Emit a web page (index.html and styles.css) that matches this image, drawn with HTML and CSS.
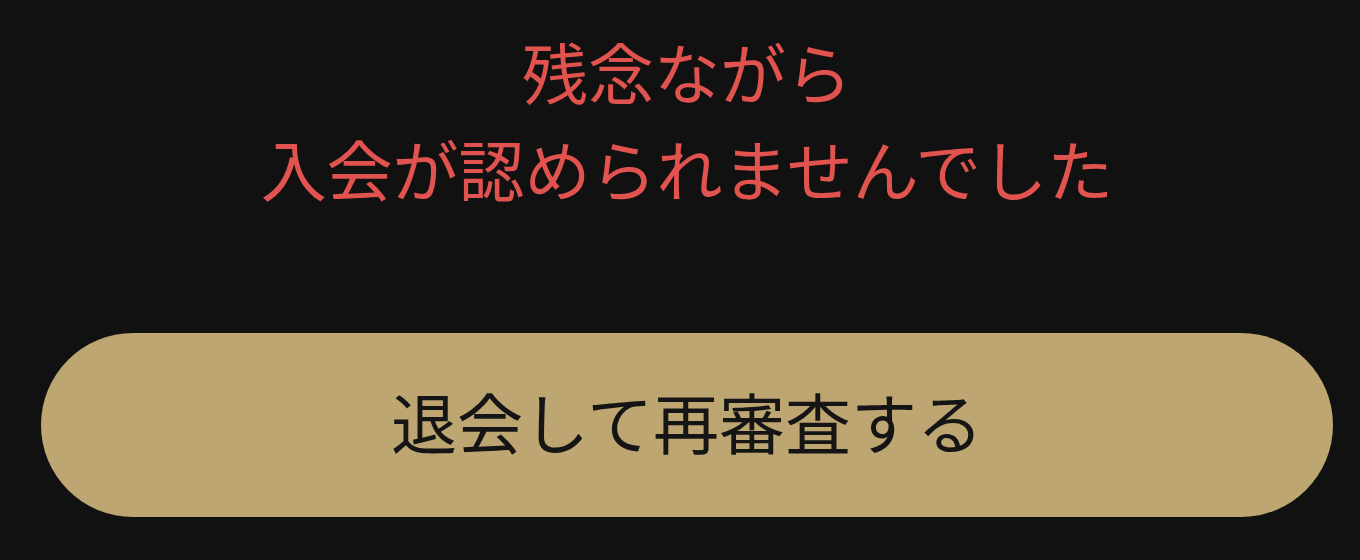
FILE: index.html
```html
<!DOCTYPE html>
<html lang="ja">
<head>
<meta charset="utf-8">
<link rel="stylesheet" href="styles.css">
</head>
<body>
<main class="screen">
  <p class="message">残念ながら<br>入会が認められませんでした</p>
  <button class="action" type="button">退会して再審査する</button>
</main>
</body>
</html>
```
FILE: styles.css
```css
html, body {
  margin: 0;
  padding: 0;
  background: #111111;
}
.screen {
  width: 1360px;
  height: 560px;
  box-sizing: border-box;
  padding: 22px 27px 0 41px;
  display: flex;
  flex-direction: column;
  align-items: stretch;
  font-family: "Noto Sans CJK JP", "Noto Sans", sans-serif;
}
.message {
  margin: 0;
  text-align: center;
  color: #e0534f;
  font-size: 66px;
  line-height: 97px;
  font-weight: 400;
}
.action {
  margin-top: 117px;
  height: 184px;
  border: none;
  border-radius: 92px;
  background: #bda672;
  color: #151515;
  font-family: inherit;
  font-size: 66px;
  font-weight: 400;
  padding: 0 0 10px 0;
}
```
